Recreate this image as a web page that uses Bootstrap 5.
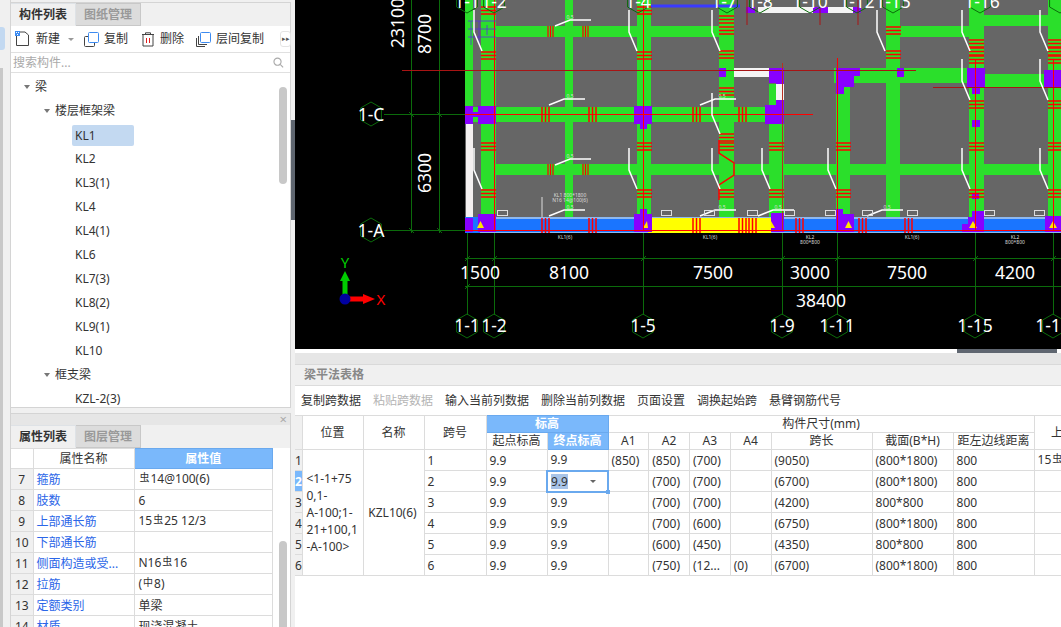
<!DOCTYPE html>
<html lang="zh">
<head>
  <meta charset="UTF-8">
  <title>梁平法表格</title>
  <link href="https://cdn.jsdelivr.net/npm/bootstrap@5.3.3/dist/css/bootstrap.min.css" rel="stylesheet">
  <style>
    html, body { height: 627px; overflow: hidden; }
    body { font-family: "Noto Sans", "Noto Sans CJK SC", sans-serif; font-size: 12px; color: #333; background: #f0f0f0; }
    .app-shell { width: 1061px; height: 627px; }

    /* left rail */
    .side-rail { width: 11px; flex: none; padding-top: 27px; border-right: 1px solid #d4d4d4; }
    .rail-active { width: 5px; height: 23px; background: #c3d9f1; border-radius: 0 3px 3px 0; margin-bottom: 18px; }
    .rail-thumb { width: 3px; height: 559px; background: #c8c8c8; }

    /* left column */
    .left-col { width: 280px; flex: none; padding-top: 2px; }
    .pane { background: #fff; border: 1px solid #d4d4d4; border-left: 0; }
    .pane-top { height: 406px; }
    .pane-bottom { margin-top: 5px; flex: 1; border-bottom: 0; min-height: 0; }
    .pane-close { height: 11px; background: #e6e6e6; line-height: 11px; text-align: right; padding-right: 3px; color: #aaa; font-size: 13px; }
    .tab-row { height: 23px; background: #f0f0f0; border-bottom: 1px solid #d4d4d4; flex-wrap: nowrap; }
    .tab-row .nav-link { width: 65px; height: 23px; padding: 0; line-height: 21px; text-align: center; font-size: 12px; font-weight: 700; border: 1px solid #c8c8c8; border-left: 0; border-radius: 0; margin: 0; color: #999; background: #dcdcdc; }
    .tab-row .nav-link.active { color: #333; background: #f0f0f0; border-bottom-color: #f0f0f0; }
    .tool-row { height: 27px; padding-left: 4px; border-bottom: 1px solid #e0e0e0; }
    .tool-btn { padding: 0; border: 0; font-size: 12px; color: #333; display: flex; align-items: center; gap: 5px; white-space: nowrap; flex: none; }
    .tool-btn svg { display: block; }
    .tool-caret { width: 0; height: 0; border: 3px solid transparent; border-top: 3px solid #999; border-bottom: 0; margin-left: 2px; }
    .new-btn { margin-right: 10px; gap: 6px; }
    .copy-btn { margin-right: 13px; }
    .del-btn { margin-right: 12px; }
    .more-btn { width: 11px; height: 16px; border: 1px solid #e4e4e4; border-radius: 3px; margin-left: 16px; color: #555; font-size: 7px; line-height: 14px; text-align: center; flex: none; }
    .search-row { height: 20px; border-bottom: 1px solid #e0e0e0; padding: 0 6px 0 2px; }
    .search-row input { border: 0; padding: 0; height: 18px; font-size: 12px; box-shadow: none; border-radius: 0; }
    .search-row input::placeholder { color: #aaa; }
    .tree-wrap { flex: 1; min-height: 0; overflow: hidden; }
    .tree-list { margin: 2px 0 0; padding: 0; list-style: none; }
    .tree-list li { height: 24px; line-height: 24px; white-space: nowrap; display: flex; align-items: center; }
    .lvl-1 { padding-left: 13px; }
    .lvl-2 { padding-left: 33px; }
    .lvl-3 { padding-left: 60px; }
    .tree-caret { width: 0; height: 0; border: 3px solid transparent; border-top: 4px solid #777; border-bottom: 0; margin-right: 5px; }
    .tree-pick { display: inline-block; width: 62px; height: 21px; line-height: 21px; background: #c3d9f1; border-radius: 2px; padding-left: 3px; margin-left: 1px; }
    .tree-leaf { padding-left: 4px; }
    .scroll-thumb { position: absolute; width: 8px; background: #c8c8c8; border-radius: 4px; right: 3px; }
    .thumb-tree { top: 14px; height: 97px; }
    .thumb-prop { top: 93px; bottom: 0; border-radius: 4px 4px 0 0; }

    /* property table */
    .prop-table { table-layout: fixed; width: 262px; margin: 0; border-collapse: collapse; font-size: 12px; }
    .prop-table th, .prop-table td { padding: 0 3px; height: 21px; line-height: 19px; border: 1px solid #dcdcdc; font-weight: 400; color: #333; white-space: nowrap; overflow: hidden; text-overflow: ellipsis; box-shadow: none; vertical-align: middle; }
    .prop-table thead th { height: 20px; }
    .prop-table tr > :first-child { width: 22px; background: #f0f0f0; text-align: center; font-size: 12px; padding: 0; border-left: 0; }
    .prop-table thead tr > :first-child { background: #fff; }
    .prop-table th { text-align: center; }
    .prop-table .name-head { width: 101px; }
    .prop-table th.val-head { background: #7ab8fb; color: #fff; font-weight: 700; border-color: #6aa9ee; }
    .prop-table td.attr-name { color: #2b66e8; }
    .prop-table td.attr-val { padding-left: 4px; }
    .bar-sym { font-size: 10px; position: relative; top: -2px; margin: 0 1px; }

    /* splitter */
    .split-bar { width: 4px; flex: none; padding-top: 120px; }
    .split-grip { height: 100px; background: #5f6670; }

    /* canvas */
    .right-col { width: 766px; flex: none; }
    .cad-view { display: block; width: 766px; height: 349px; background: #000; flex: none; }
    .cad-view text { font-family: "Noto Sans", sans-serif; fill: #fff; font-size: 17.5px; text-anchor: middle; }
    .cad-view text.tiny { font-size: 5px; fill: #ddd; }
    .table-gap { height: 4px; background: #fff; flex: none; padding-left: 662px; }
    .table-gap div { width: 100px; height: 4px; background: #5f6670; }
    .table-strip { height: 12px; background: #e6e6e6; border-bottom: 1px solid #d9d9d9; flex: none; }
    .table-title { height: 21px; line-height: 20px; background: #f0f0f0; border-bottom: 1px solid #dcdcdc; padding-left: 9px; color: #888; font-weight: 700; flex: none; }
    .table-tools { height: 29px; background: #fff; gap: 12px; padding-left: 6px; flex: none; }
    .table-tools .btn { padding: 0; border: 0; font-size: 12px; color: #333; }
    .table-tools .btn:disabled { color: #b4b4b4; opacity: 1; }
    .grid-wrap { flex: 1; background: #fff; overflow: hidden; }

    /* beam table */
    .beam-table { table-layout: fixed; width: 833px; margin: 0; border-collapse: collapse; font-size: 12px; }
    .beam-table th, .beam-table td { height: 21px; padding: 0 3px; line-height: 17px; border: 1px solid #dcdcdc; font-weight: 400; color: #333; white-space: nowrap; overflow: hidden; box-shadow: none; vertical-align: middle; }
    .beam-table thead th { height: 17px; text-align: center; line-height: 16px; padding: 0; }
    .beam-table .row-no { padding: 0; text-align: left; background: #f0f0f0; border-left: 0; }
    .beam-table thead .row-no { background: #f0f0f0; }
    .beam-table .row-no.on { background: #7ab8fb; color: #fff; font-weight: 700; }
    .beam-table th.blue-head { background: #7ab8fb; color: #fff; font-weight: 700; border-color: #6aa9ee; }
    .beam-table td.pos-cell { white-space: normal; padding: 0 0 0 4px; }
    .beam-table td.mid-cell { text-align: center; padding: 0 2px 0 0; }
    .beam-table td.edit-cell { position: relative; padding: 0 3px; border: 2px solid #6aa9ee; overflow: visible; }
    .edit-value { background: #a8c4e8; display: inline-block; line-height: 15px; }
    .edit-caret { position: absolute; right: 11px; top: 8px; width: 0; height: 0; border: 3px solid transparent; border-top: 3px solid #666; border-bottom: 0; }
    .fill-handle { position: absolute; right: -3px; bottom: -3px; width: 4px; height: 4px; background: #6aa9ee; }
    .w-no { width: 7px; } .w-pos, .w-name { width: 61px; } .w-span { width: 62px; } .w-lvl { width: 61px; }
    .w-a { width: 40.75px; } .w-len { width: 101px; } .w-sec, .w-off { width: 81px; } .w-top { width: 94px; }
  </style>
</head>
<body>
<div class="app-shell d-flex">
  <div class="side-rail">
    <div class="rail-active"></div>
    <div class="rail-thumb"></div>
  </div>

  <div class="left-col d-flex flex-column">
    <section class="pane pane-top d-flex flex-column">
      <ul class="nav nav-tabs tab-row border-0 ps-0">
        <li class="nav-item"><a class="nav-link active" href="#">构件列表</a></li>
        <li class="nav-item"><a class="nav-link" href="#">图纸管理</a></li>
      </ul>
      <div class="tool-row d-flex align-items-center">
        <button class="btn tool-btn new-btn">
          <svg width="15" height="16" viewBox="0 0 15 16"><path d="M1.500 5v9.500h12V4L10 1H5" fill="none" stroke="#444"/><rect x="0" y="0" width="5" height="5" fill="#3d8bf0"/><path d="M1 1h1v1H1zM3 1h1v1H3zM2 3h1v1H2z" fill="#fff"/></svg>
          新建<span class="tool-caret"></span>
        </button>
        <button class="btn tool-btn copy-btn">
          <svg width="15" height="15" viewBox="0 0 15 15"><rect x="0.500" y="4.500" width="10" height="10" rx="1" fill="none" stroke="#444"/><rect x="4.500" y="0.500" width="10" height="10" rx="1" fill="#fff" stroke="#3d8bf0"/></svg>
          复制
        </button>
        <button class="btn tool-btn del-btn">
          <svg width="14" height="15" viewBox="0 0 14 15"><path d="M1 2.500h12M4.500 2.500V.8h5v1.700M2 2.500v11.500h10V2.500" fill="none" stroke="#444"/><path d="M5.500 6v5M8.500 6v5" stroke="#e02020"/></svg>
          删除
        </button>
        <button class="btn tool-btn">
          <svg width="15" height="15" viewBox="0 0 15 15"><path d="M.5 6v8.500H9M2.500 4v8.500H11" fill="none" stroke="#444"/><rect x="4.500" y="0.500" width="10" height="10" rx="1" fill="#fff" stroke="#3d8bf0"/></svg>
          层间复制
        </button>
        <span class="more-btn">▸▸</span>
      </div>
      <div class="search-row d-flex align-items-center">
        <input class="form-control" type="text" placeholder="搜索构件...">
        <svg width="11" height="11" viewBox="0 0 11 11" class="flex-none"><circle cx="4.700" cy="4.700" r="3.700" fill="none" stroke="#aaa" stroke-width="1.200"/><path d="M7.500 7.500l3 3" stroke="#aaa" stroke-width="1.200"/></svg>
      </div>
      <div class="tree-wrap position-relative">
        <ul class="tree-list">
          <li class="lvl-1"><span class="tree-caret"></span>梁</li>
          <li class="lvl-2"><span class="tree-caret"></span>楼层框架梁</li>
          <li class="lvl-3"><span class="tree-pick">KL1</span></li>
          <li class="lvl-3"><span class="tree-leaf">KL2</span></li>
          <li class="lvl-3"><span class="tree-leaf">KL3(1)</span></li>
          <li class="lvl-3"><span class="tree-leaf">KL4</span></li>
          <li class="lvl-3"><span class="tree-leaf">KL4(1)</span></li>
          <li class="lvl-3"><span class="tree-leaf">KL6</span></li>
          <li class="lvl-3"><span class="tree-leaf">KL7(3)</span></li>
          <li class="lvl-3"><span class="tree-leaf">KL8(2)</span></li>
          <li class="lvl-3"><span class="tree-leaf">KL9(1)</span></li>
          <li class="lvl-3"><span class="tree-leaf">KL10</span></li>
          <li class="lvl-2"><span class="tree-caret"></span>框支梁</li>
          <li class="lvl-3"><span class="tree-leaf">KZL-2(3)</span></li>
        </ul>
        <div class="scroll-thumb thumb-tree"></div>
      </div>
    </section>

    <section class="pane pane-bottom d-flex flex-column">
      <div class="pane-close">×</div>
      <ul class="nav nav-tabs tab-row border-0 ps-0">
        <li class="nav-item"><a class="nav-link active" href="#">属性列表</a></li>
        <li class="nav-item"><a class="nav-link" href="#">图层管理</a></li>
      </ul>
      <div class="tree-wrap position-relative">
        <table class="table prop-table">
          <thead>
            <tr><th></th><th class="name-head">属性名称</th><th class="val-head">属性值</th></tr>
          </thead>
          <tbody>
            <tr><td>7</td><td class="attr-name">箍筋</td><td class="attr-val"><span class="bar-sym">虫</span>14@100(6)</td></tr>
            <tr><td>8</td><td class="attr-name">肢数</td><td class="attr-val">6</td></tr>
            <tr><td>9</td><td class="attr-name">上部通长筋</td><td class="attr-val">15<span class="bar-sym">虫</span>25 12/3</td></tr>
            <tr><td>10</td><td class="attr-name">下部通长筋</td><td class="attr-val"></td></tr>
            <tr><td>11</td><td class="attr-name">侧面构造或受...</td><td class="attr-val">N16<span class="bar-sym">虫</span>16</td></tr>
            <tr><td>12</td><td class="attr-name">拉筋</td><td class="attr-val">(<span class="bar-sym">中</span>8)</td></tr>
            <tr><td>13</td><td class="attr-name">定额类别</td><td class="attr-val">单梁</td></tr>
            <tr><td>14</td><td class="attr-name">材质</td><td class="attr-val">现浇混凝土</td></tr>
          </tbody>
        </table>
        <div class="scroll-thumb thumb-prop"></div>
      </div>
    </section>
  </div>

  <div class="split-bar"><div class="split-grip"></div></div>

  <div class="right-col d-flex flex-column">
    <svg class="cad-view" viewBox="295 0 766 349" xmlns="http://www.w3.org/2000/svg">
      <defs>
        <g id="sv" stroke="#f00" stroke-width="1.500"><path d="M0 1h15M0 4.500h15M0 8h15"/></g>
        <g id="sh" stroke="#f00" stroke-width="1.500"><path d="M1 0v15M4.500 0v15M8 0v15"/></g>
        <path id="hx" d="M0-12L10.400-6V6L0 12-10.400 6V-6Z" fill="none" stroke="#0b6b0b"/>
        <path id="la" d="M0 0L15-6H36" fill="none" stroke="#fff" stroke-width="1.500"/>
        <path id="lb" d="M0 0V22L8 41" fill="none" stroke="#fff" stroke-width="1.500"/>
      </defs>

      <!-- slab -->
      <rect x="465" y="0" width="596" height="218" fill="#666"/>

      <!-- beams -->
      <g fill="#2bdf2b" shape-rendering="crispEdges">
        <rect x="465" y="0" width="8" height="107"/>
        <rect x="481" y="0" width="15" height="218"/>
        <rect x="565" y="0" width="8" height="218"/>
        <rect x="637" y="0" width="14" height="218"/>
        <rect x="719" y="0" width="15" height="218"/>
        <rect x="769" y="84" width="15" height="134"/>
        <rect x="836" y="85" width="14" height="133"/>
        <rect x="886" y="0" width="14" height="218"/>
        <rect x="969" y="0" width="15" height="218"/>
        <rect x="1048" y="0" width="13" height="218"/>
        <rect x="496" y="26" width="238" height="11"/>
        <rect x="886" y="26" width="83" height="11"/>
        <rect x="984" y="15" width="77" height="11"/>
        <rect x="834" y="68" width="135" height="15"/>
        <rect x="984" y="74" width="77" height="14"/>
        <rect x="465" y="107" width="319" height="15"/>
        <rect x="496" y="164" width="565" height="11"/>
      </g>

      <!-- white strips, bottom band -->
      <g shape-rendering="crispEdges">
        <rect x="466" y="123" width="7" height="95" fill="#f4f0f0"/>
        <rect x="734" y="68" width="35" height="9" fill="#f4f4f4"/>
        <rect x="776" y="84" width="8" height="16" fill="#f4f4f4"/>
        <rect x="758" y="7" width="95" height="6" fill="#f4f4f4"/>
        <rect x="465" y="217" width="596" height="16" fill="#1a75ff"/>
        <rect x="496" y="217" width="565" height="2" fill="#8db8f0"/>
        <rect x="480" y="232" width="581" height="1" fill="#8db8f0"/>
        <rect x="648" y="218" width="123" height="15" fill="#ff0"/>
      </g>

      <!-- columns -->
      <g fill="#8800ff" shape-rendering="crispEdges">
        <rect x="465" y="106" width="8" height="18"/><rect x="478" y="106" width="18" height="18"/><rect x="473" y="112" width="5" height="5"/>
        <rect x="465" y="218" width="8" height="14"/><rect x="478" y="214" width="18" height="18"/>
        <rect x="634" y="106" width="18" height="18"/><rect x="640" y="124" width="7" height="5"/>
        <rect x="634" y="214" width="18" height="18"/><rect x="640" y="209" width="7" height="5"/>
        <rect x="719" y="68" width="7" height="9"/>
        <rect x="769" y="68" width="15" height="15"/><rect x="776" y="76" width="8" height="8"/>
        <rect x="765" y="105" width="19" height="19"/><rect x="776" y="100" width="8" height="5"/>
        <rect x="836" y="68" width="24" height="8"/><rect x="836" y="76" width="18" height="11"/><rect x="836" y="87" width="8" height="7"/>
        <rect x="897" y="68" width="7" height="9"/>
        <rect x="967" y="68" width="18" height="20"/><rect x="972" y="88" width="8" height="6"/>
        <rect x="972" y="120" width="8" height="7"/>
        <rect x="972" y="193" width="7" height="6"/>
        <rect x="1044" y="70" width="17" height="18"/>
        <rect x="771" y="213" width="13" height="19"/>
        <rect x="836" y="214" width="18" height="18"/><rect x="836" y="209" width="7" height="5"/>
        <rect x="972" y="211" width="12" height="6"/><rect x="968" y="217" width="16" height="7"/><rect x="962" y="224" width="22" height="8"/>
        <rect x="1045" y="216" width="16" height="16"/>
        <rect x="746" y="7" width="9" height="6"/><rect x="813" y="7" width="15" height="6"/><rect x="853" y="7" width="8" height="6"/>
      </g>
      <g fill="#ffe600">
        <path d="M477 228l3.500-7 3.500 7z"/><path d="M643 228l4-7 1 7z"/><path d="M771 228l0-7 4 7z"/>
        <path d="M845 228l3.500-7 3.500 7z"/><path d="M969 228l4-7 4 7z"/><path d="M1049 228l4-7 4 7z"/>
      </g>

      <!-- stirrups on vertical beams -->
      <use href="#sv" x="481" y="6"/><use href="#sv" x="481" y="51"/><use href="#sv" x="481" y="142"/><use href="#sv" x="481" y="189"/>
      <use href="#sv" x="637" y="6"/><use href="#sv" x="637" y="51"/><use href="#sv" x="637" y="142"/><use href="#sv" x="637" y="189"/>
      <use href="#sv" x="719" y="15"/><use href="#sv" x="719" y="26"/><use href="#sv" x="719" y="50"/><use href="#sv" x="719" y="87"/><use href="#sv" x="719" y="133"/><use href="#sv" x="719" y="142"/><use href="#sv" x="719" y="189"/>
      <use href="#sv" x="769" y="142"/><use href="#sv" x="769" y="189"/>
      <use href="#sv" x="836" y="142"/><use href="#sv" x="836" y="189"/>
      <use href="#sv" x="886" y="26"/><use href="#sv" x="886" y="50"/>
      <use href="#sv" x="969" y="39"/><use href="#sv" x="969" y="47"/><use href="#sv" x="969" y="55"/><use href="#sv" x="969" y="100"/><use href="#sv" x="969" y="142"/><use href="#sv" x="969" y="189"/>
      <use href="#sv" x="1048" y="39"/><use href="#sv" x="1048" y="47"/><use href="#sv" x="1048" y="55"/><use href="#sv" x="1048" y="100"/><use href="#sv" x="1048" y="142"/><use href="#sv" x="1048" y="189"/>

      <!-- stirrups on horizontal beams -->
      <g stroke="#f00" stroke-width="1.200">
        <path d="M548 26v11M550.500 26v11M553 26v11M583 26v11M585.500 26v11M588 26v11"/>
        <path d="M548 164v11M550.500 164v11M553 164v11M583 164v11M585.500 164v11M588 164v11"/>
      </g>
      <use href="#sh" x="541" y="107"/><use href="#sh" x="588" y="107"/><use href="#sh" x="692" y="107"/><use href="#sh" x="738" y="107"/>
      <use href="#sh" x="541" y="218"/><use href="#sh" x="588" y="218"/><use href="#sh" x="692" y="218"/><use href="#sh" x="738" y="218"/><use href="#sh" x="748" y="218"/>
      <use href="#sh" x="795" y="218"/><use href="#sh" x="858" y="218"/><use href="#sh" x="904" y="218"/>

      <!-- axis lines -->
      <g stroke="#0b6b0b" fill="none">
        <path d="M411.500 0V233M439.500 0V233M384 114.500H465M384 230.500H465"/>
        <path d="M467.500 233V315M494.500 233V315M643.500 233V315M782.500 233V315M837.500 233V315M975.500 233V315M1053.500 233V315"/>
        <path d="M465 258.500H1061M465 286.500H1061"/>
        <path d="M409 112l5 5M437 112l5 5M409 228l5 5M437 228l5 5M465 261l5-5M492 261l5-5M641 261l5-5M780 261l5-5M835 261l5-5M973 261l5-5M1051 261l5-5M465 289l5-5"/>
      </g>
      <g stroke="#f00" fill="none">
        <path d="M465 114.500H813M465 230.500H1061M494.500 0V230M643.500 0V230M837.500 58V230M975.500 60V230M1053.500 60V230"/>
      </g>
      <g stroke="#a81414" fill="none">
        <path d="M402 70.500H916M933 87.500H1061M747 0V25M820 0V25M858 0V25"/>
        <path d="M782.500 63V230" stroke="#b83020"/>
      </g>
      <path d="M651 6H740" stroke="#3a3aff" stroke-width="3"/>
      <path d="M468 21H496M468 29H496M468 37H496M471 21V45M479 21V45M487 25V35" stroke="#5a2ee0" stroke-width=".8" fill="none"/>
      <path d="M719 140V153L734 163V175L719 185V200" fill="none" stroke="#f00" stroke-width="1.500"/>

      <!-- leaders -->
      <use href="#la" x="555" y="26"/><use href="#la" x="549" y="105"/><use href="#la" x="555" y="165"/><use href="#la" x="549" y="216"/>
      <use href="#la" x="700" y="105"/><use href="#la" x="700" y="216"/><use href="#la" x="758" y="216"/><use href="#la" x="867" y="216"/>
      <use href="#lb" x="474" y="10"/><use href="#lb" x="474" y="148"/><use href="#lb" x="629" y="10"/><use href="#lb" x="629" y="148"/>
      <use href="#lb" x="712" y="10"/><use href="#lb" x="712" y="93"/><use href="#lb" x="712" y="148"/><use href="#lb" x="762" y="148"/>
      <use href="#lb" x="828" y="148"/><use href="#lb" x="877" y="10"/><use href="#lb" x="962" y="10"/><use href="#lb" x="962" y="59"/><use href="#lb" x="962" y="148"/>
      <use href="#lb" x="1040" y="10"/><use href="#lb" x="1040" y="59"/><use href="#lb" x="1040" y="148"/>
      <path d="M542 197V217" stroke="#ddd"/>

      <!-- small tags -->
      <g fill="none" stroke="#ddd" shape-rendering="crispEdges">
        <rect x="497.500" y="210.500" width="10" height="5"/><rect x="661.500" y="210.500" width="10" height="5"/><rect x="704.500" y="210.500" width="10" height="5"/>
        <rect x="747.500" y="210.500" width="10" height="5"/><rect x="784.500" y="210.500" width="10" height="5"/><rect x="825.500" y="210.500" width="10" height="5"/>
        <rect x="862.500" y="210.500" width="10" height="5"/><rect x="907.500" y="210.500" width="10" height="5"/><rect x="984.500" y="210.500" width="10" height="5"/>
        <rect x="1034.500" y="210.500" width="10" height="5"/>
      </g>
      <g>
        <text class="tiny" x="570" y="19">0.5</text><text class="tiny" x="570" y="98">0.5</text><text class="tiny" x="570" y="158">0.5</text><text class="tiny" x="570" y="209">0.5</text>
        <text class="tiny" x="722" y="98">0.5</text><text class="tiny" x="722" y="209">0.5</text><text class="tiny" x="778" y="209">0.5</text><text class="tiny" x="887" y="209">0.5</text>
        <text class="tiny" x="570" y="197">KL1 800*1800</text><text class="tiny" x="570" y="202">N16 14@100(6)</text>
        <text class="tiny" x="565" y="239">KL1(6)</text><text class="tiny" x="710" y="239">KL1(6)</text><text class="tiny" x="810" y="239">KL2</text><text class="tiny" x="810" y="244">800*800</text>
        <text class="tiny" x="912" y="239">KL1(6)</text><text class="tiny" x="1015" y="239">KL2</text><text class="tiny" x="1015" y="244">800*800</text>
      </g>

      <!-- axis bubbles -->
      <use href="#hx" x="371" y="114"/><use href="#hx" x="371" y="230"/>
      <use href="#hx" x="467" y="326"/><use href="#hx" x="494" y="326"/><use href="#hx" x="643" y="326"/><use href="#hx" x="782" y="326"/><use href="#hx" x="837" y="326"/><use href="#hx" x="975" y="326"/><use href="#hx" x="1053" y="326"/>
      <use href="#hx" x="467" y="1"/><use href="#hx" x="494" y="1"/><use href="#hx" x="638" y="1"/><use href="#hx" x="727" y="1"/><use href="#hx" x="760" y="1"/><use href="#hx" x="810" y="1"/><use href="#hx" x="857" y="1"/><use href="#hx" x="893" y="1"/><use href="#hx" x="980" y="1"/><use href="#hx" x="1060" y="1"/>

      <text x="371" y="121">1-C</text><text x="371" y="237">1-A</text>
      <text x="467" y="332">1-1</text><text x="494" y="332">1-2</text><text x="643" y="332">1-5</text><text x="782" y="332">1-9</text><text x="837" y="332">1-11</text><text x="975" y="332">1-15</text><text x="1053" y="332">1-16</text>
      <text x="467" y="8">1-1</text><text x="494" y="8">1-2</text><text x="638" y="8">1-4</text><text x="724" y="8">1-7</text><text x="760" y="8">1-8</text><text x="810" y="8">1-10</text><text x="857" y="8">1-12</text><text x="893" y="8">1-13</text><text x="982" y="8">1-16</text>

      <text x="480" y="279">1500</text><text x="569" y="279">8100</text><text x="713" y="279">7500</text><text x="810" y="279">3000</text><text x="907" y="279">7500</text><text x="1015" y="279">4200</text>
      <text x="821" y="307">38400</text>
      <text transform="translate(404 23) rotate(-90)">23100</text>
      <text transform="translate(431 34) rotate(-90)">8700</text>
      <text transform="translate(431 173) rotate(-90)">6300</text>

      <!-- UCS icon -->
      <path d="M345 296V278" stroke="#0c0" stroke-width="5"/>
      <path d="M340 281l5-10 5 10z" fill="#0c0"/>
      <path d="M349 299H364" stroke="#f00" stroke-width="5"/>
      <path d="M363 294l12 5-12 5z" fill="#f00"/>
      <circle cx="345" cy="299" r="5.500" fill="#0000a0"/>
      <text x="345" y="268" style="fill:#0c0;font-size:15px">Y</text>
      <text x="381" y="305" style="fill:#f00;font-size:15px">X</text>
    </svg>

    <div class="table-gap"><div></div></div>
    <div class="table-strip"></div>
    <div class="table-title">梁平法表格</div>
    <div class="table-tools d-flex align-items-center">
      <button class="btn">复制跨数据</button>
      <button class="btn" disabled>粘贴跨数据</button>
      <button class="btn">输入当前列数据</button>
      <button class="btn">删除当前列数据</button>
      <button class="btn">页面设置</button>
      <button class="btn">调换起始跨</button>
      <button class="btn">悬臂钢筋代号</button>
    </div>
    <div class="grid-wrap">
      <table class="table beam-table">
        <colgroup>
          <col class="w-no"><col class="w-pos"><col class="w-name"><col class="w-span"><col class="w-lvl"><col class="w-lvl">
          <col class="w-a"><col class="w-a"><col class="w-a"><col class="w-a"><col class="w-len"><col class="w-sec"><col class="w-off"><col class="w-top">
        </colgroup>
        <thead>
          <tr>
            <th class="row-no" rowspan="2"></th><th rowspan="2">位置</th><th rowspan="2">名称</th><th rowspan="2">跨号</th>
            <th class="blue-head" colspan="2">标高</th><th colspan="7">构件尺寸(mm)</th><th rowspan="2">上部通长筋</th>
          </tr>
          <tr>
            <th>起点标高</th><th class="blue-head">终点标高</th><th>A1</th><th>A2</th><th>A3</th><th>A4</th><th>跨长</th><th>截面(B*H)</th><th>距左边线距离</th>
          </tr>
        </thead>
        <tbody>
          <tr>
            <td class="row-no">1</td>
            <td class="pos-cell" rowspan="6">&lt;1-1+75<br>0,1-<br>A-100;1-<br>21+100,1<br>-A-100&gt;</td>
            <td class="mid-cell" rowspan="6">KZL10(6)</td>
            <td>1</td><td>9.9</td><td>9.9</td><td>(850)</td><td>(850)</td><td>(700)</td><td></td><td>(9050)</td><td>(800*1800)</td><td>800</td><td>15<span class="bar-sym">虫</span>25 12/3</td>
          </tr>
          <tr>
            <td class="row-no on">2</td>
            <td>2</td><td>9.9</td><td class="edit-cell"><span class="edit-value">9.9</span><span class="edit-caret"></span><span class="fill-handle"></span></td><td></td><td>(700)</td><td>(700)</td><td></td><td>(6700)</td><td>(800*1800)</td><td>800</td><td></td>
          </tr>
          <tr>
            <td class="row-no">3</td>
            <td>3</td><td>9.9</td><td>9.9</td><td></td><td>(700)</td><td>(700)</td><td></td><td>(4200)</td><td>800*800</td><td>800</td><td></td>
          </tr>
          <tr>
            <td class="row-no">4</td>
            <td>4</td><td>9.9</td><td>9.9</td><td></td><td>(700)</td><td>(600)</td><td></td><td>(6750)</td><td>(800*1800)</td><td>800</td><td></td>
          </tr>
          <tr>
            <td class="row-no">5</td>
            <td>5</td><td>9.9</td><td>9.9</td><td></td><td>(600)</td><td>(450)</td><td></td><td>(4350)</td><td>800*800</td><td>800</td><td></td>
          </tr>
          <tr>
            <td class="row-no">6</td>
            <td>6</td><td>9.9</td><td>9.9</td><td></td><td>(750)</td><td>(12...</td><td>(0)</td><td>(6700)</td><td>(800*1800)</td><td>800</td><td></td>
          </tr>
        </tbody>
      </table>
    </div>
  </div>
</div>
<script src="https://cdn.jsdelivr.net/npm/bootstrap@5.3.3/dist/js/bootstrap.bundle.min.js"></script>
</body>
</html>
